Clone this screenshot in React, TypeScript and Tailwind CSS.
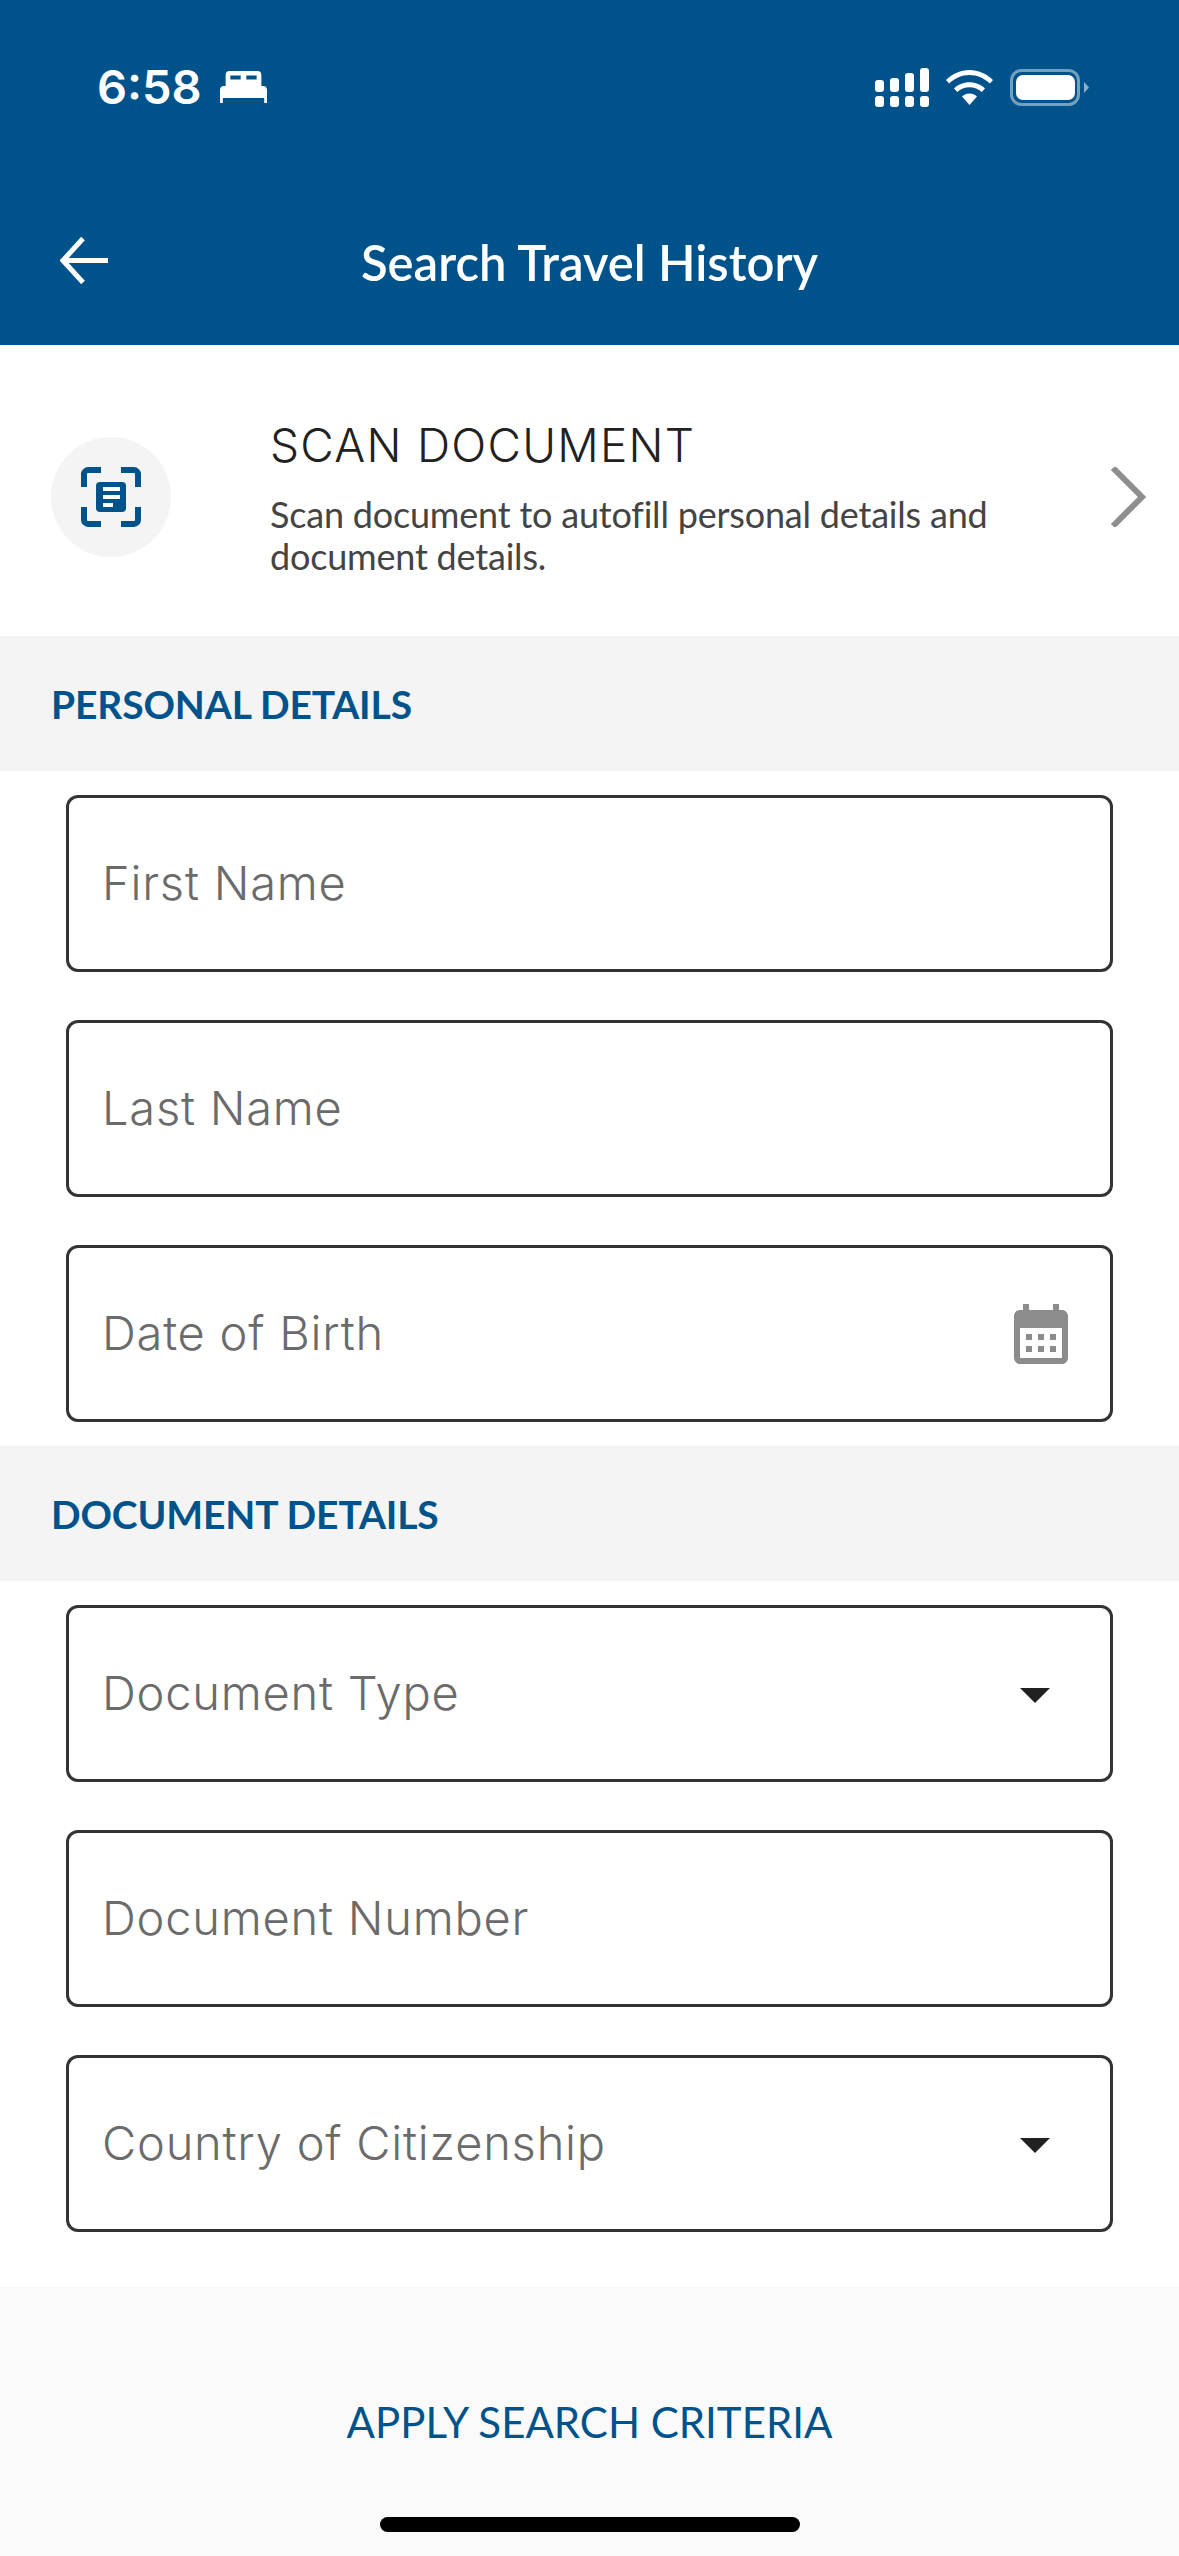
import React from "react";

const Lato = "font-['Lato',sans-serif]";

function Field({ label, icon }: { label: string; icon?: React.ReactNode }) {
  return (
    <div className="h-[177px] w-[1047px] rounded-[12px] border-[3px] border-[#333333] flex items-center justify-between pl-[33px] pb-[3px] relative bg-white">
      <span className="font-['Inter',sans-serif] font-[350] text-[47px] tracking-[0.78px] text-[#6b6b6b] leading-none">{label}</span>
      {icon}
    </div>
  );
}

function Caret() {
  return (
    <svg className="absolute left-[951px] top-[80px]" width="30" height="15" viewBox="0 0 30 15">
      <path d="M0 0H30L15 15Z" fill="#212121" />
    </svg>
  );
}

function Calendar() {
  return (
    <svg className="absolute left-[945px] top-[56px]" width="54" height="60" viewBox="0 0 54 60">
      <path d="M9 0H15V6H39V0H45V6H48C51.3 6 54 8.7 54 12V54C54 57.3 51.3 60 48 60H6C2.7 60 0 57.3 0 54V12C0 8.7 2.7 6 6 6H9Z" fill="#8c8c8c" />
      <rect x="6" y="24" width="42" height="30" fill="#fff" />
      {[12, 24, 36].map((x) =>
        [30, 42].map((y) => <rect key={`${x}-${y}`} x={x} y={y} width="6" height="6" fill="#8c8c8c" />)
      )}
    </svg>
  );
}

function Band({ children }: { children: string }) {
  return (
    <div className="h-[135px] bg-[#f4f4f4] flex items-center pl-[51px] pt-[2px]">
      <span className={`${Lato} font-bold text-[39px] tracking-[-0.15px] leading-none text-[#00538a]`}>{children}</span>
    </div>
  );
}

export default function App() {
  return (
    <div className={`w-[1179px] h-[2556px] bg-white flex flex-col relative overflow-hidden ${Lato}`}>
      <header className="h-[345px] bg-[#00538a] text-white flex flex-col">
        <div className="h-[208px] relative">
          <div className="flex items-center pt-[61px] pl-[97px] gap-[18px]">
            <span className="font-['Inter',sans-serif] font-semibold text-[47px] leading-[52px]">6:58</span>
            <svg width="47" height="32" viewBox="0 0 50 32" fill="#fff" preserveAspectRatio="none">
              <path fillRule="evenodd" d="M10 0H40C42.5 0 44 1.5 44 4V15H6V4C6 1.5 7.5 0 10 0ZM11 4.5V8.5H22V4.5ZM28 4.5V8.5H39V4.5Z" />
              <path d="M4 15H46C48.4 15 50 16.6 50 19V32H47V27H3V32H0V19C0 16.6 1.6 15 4 15Z" />
            </svg>
          </div>
          <svg className="absolute left-[875px] top-[68px]" width="54" height="39" viewBox="0 0 54 39" fill="#fff">
            <rect x="0" y="12" width="9" height="12" rx="3" />
            <rect x="15" y="10" width="9" height="14" rx="3" />
            <rect x="30" y="5" width="9" height="19" rx="3" />
            <rect x="45" y="0" width="9" height="24" rx="3" />
            <rect x="0" y="28" width="9" height="11" rx="3" />
            <rect x="15" y="28" width="9" height="11" rx="3" />
            <rect x="30" y="28" width="9" height="11" rx="3" />
            <rect x="45" y="28" width="9" height="11" rx="3" />
          </svg>
          <svg className="absolute left-[946px] top-[70px]" width="47" height="35" viewBox="0 0 47 35" fill="#fff">
            <path d="M0 10C6.5 3.8 14.6 0 23.5 0S40.5 3.8 47 10L43.8 13.5C38.2 8.2 31.2 5 23.5 5S8.8 8.2 3.2 13.5Z" />
            <path d="M8 18.5C12 14.6 17.5 12.3 23.5 12.3S35 14.6 39 18.5L35.7 22C32.5 19 28.2 17.2 23.5 17.2S14.5 19 11.3 22Z" />
            <path d="M16 26.4C18 24.6 20.6 23.5 23.5 23.5S29 24.6 31 26.4L23.5 35Z" />
          </svg>
          <svg className="absolute left-[1010px] top-[69px]" width="79" height="37" viewBox="0 0 79 37">
            <rect x="1.5" y="1.5" width="67" height="34" rx="10" fill="none" stroke="#fff" strokeOpacity="0.45" strokeWidth="3" />
            <rect x="6" y="6" width="59" height="25" rx="7" fill="#fff" />
            <path d="M74 13L79 18.5L74 24Z" fill="#fff" fillOpacity="0.55" />
          </svg>
        </div>
        <div className="h-[106px] relative flex items-center justify-center">
          <svg className="absolute left-[60px] top-[29px]" width="48" height="47" viewBox="0 0 48 47" fill="none" stroke="#fff" strokeWidth="5">
            <path d="M23 1.5L3 23.5L23 45.5M3 23.5H48" />
          </svg>
          <span className="font-semibold text-[49px] leading-none pt-[2px]">Search Travel History</span>
        </div>
      </header>

      <div className="h-[291px] flex items-center pl-[51px] pt-[13px]">
        <div className="w-[120px] h-[120px] rounded-full bg-[#f4f4f4] flex items-center justify-center shrink-0">
          <svg width="60" height="60" viewBox="0 0 60 60">
            <path d="M20 3H7C5 3 3 5 3 7V20M40 3H53C55 3 57 5 57 7V20M3 40V53C3 55 5 57 7 57H20M57 40V53C57 55 55 57 53 57H40" fill="none" stroke="#00538a" strokeWidth="6" />
            <rect x="15" y="15" width="30" height="30" rx="4" fill="#00538a" />
            <rect x="22" y="20" width="17" height="4" fill="#fff" />
            <rect x="22" y="28" width="17" height="4" fill="#fff" />
            <rect x="22" y="36" width="10" height="4" fill="#fff" />
          </svg>
        </div>
        <div className="ml-[99px] flex flex-col w-[760px] mt-[3px]">
          <span className="font-['Inter',sans-serif] font-[350] text-[46px] leading-[50px] text-[#212121] tracking-[1.25px] whitespace-nowrap">SCAN DOCUMENT</span>
          <span className="mt-[23px] text-[36px] leading-[42px] text-[#444444] tracking-[-0.2px]">
            Scan document to autofill personal details and document details.
          </span>
        </div>
        <svg className="ml-[80px]" width="36" height="60" viewBox="0 0 36 60" fill="none" stroke="#8e8e8e" strokeWidth="6">
          <path d="M3 1L32 30L3 59" />
        </svg>
      </div>

      <Band>PERSONAL DETAILS</Band>
      <div className="flex flex-col gap-[48px] pl-[66px] py-[24px]">
        <Field label="First Name" />
        <Field label="Last Name" />
        <Field label="Date of Birth" icon={<Calendar />} />
      </div>
      <Band>DOCUMENT DETAILS</Band>
      <div className="flex flex-col gap-[48px] pl-[66px] pt-[24px] pb-[54px]">
        <Field label="Document Type" icon={<Caret />} />
        <Field label="Document Number" />
        <Field label="Country of Citizenship" icon={<Caret />} />
      </div>
      <footer className="flex-1 bg-[#fafafa] flex justify-center pt-[111px]">
        <span className="text-[42px] leading-[50px] text-[#00538a]">APPLY SEARCH CRITERIA</span>
      </footer>
      <div className="absolute left-[380px] top-[2517px] w-[420px] h-[15px] rounded-full bg-black" />
    </div>
  );
}
